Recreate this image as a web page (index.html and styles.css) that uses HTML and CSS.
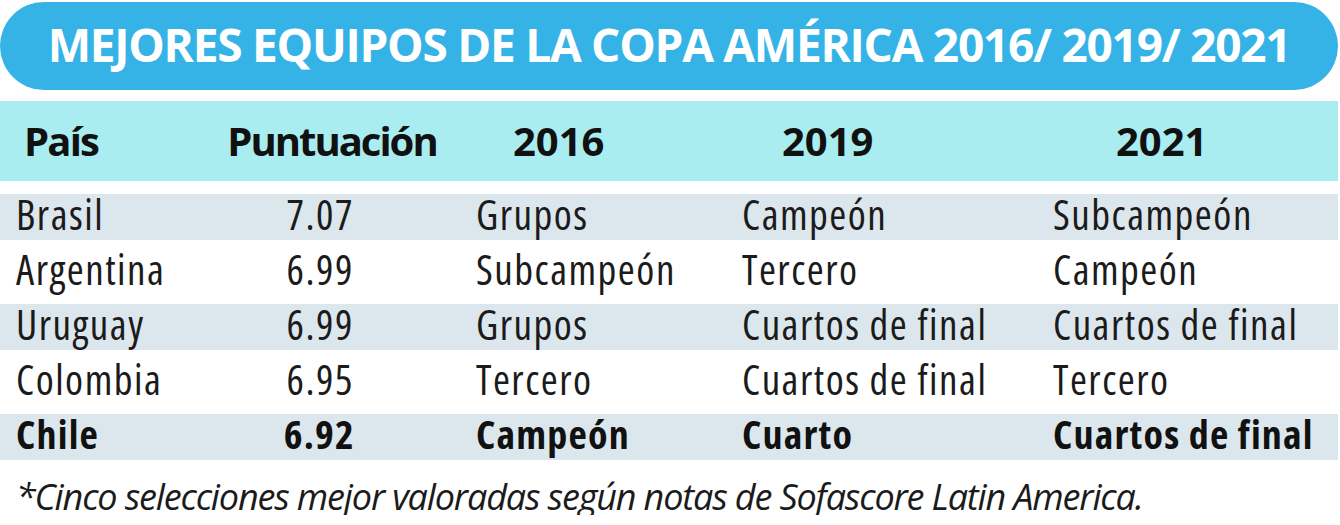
FILE: index.html
```html
<!DOCTYPE html>
<html lang="es">
<head>
<meta charset="utf-8">
<title>Mejores equipos de la Copa América</title>
<link rel="stylesheet" href="styles.css">
</head>
<body>
<div class="page">
  <div class="title">MEJORES EQUIPOS DE LA COPA AMÉRICA 2016/ 2019/ 2021</div>
  <div class="head">
    <div class="h h1">País</div>
    <div class="h h2">Puntuación</div>
    <div class="h h3">2016</div>
    <div class="h h4">2019</div>
    <div class="h h5">2021</div>
  </div>
  <div class="rows">
    <div class="row shade">
      <div class="c c1">Brasil</div><div class="c c2">7.07</div><div class="c c3">Grupos</div><div class="c c4">Campeón</div><div class="c c5">Subcampeón</div>
    </div>
    <div class="row">
      <div class="c c1">Argentina</div><div class="c c2">6.99</div><div class="c c3">Subcampeón</div><div class="c c4">Tercero</div><div class="c c5">Campeón</div>
    </div>
    <div class="row shade">
      <div class="c c1">Uruguay</div><div class="c c2">6.99</div><div class="c c3">Grupos</div><div class="c c4">Cuartos de final</div><div class="c c5">Cuartos de final</div>
    </div>
    <div class="row">
      <div class="c c1">Colombia</div><div class="c c2">6.95</div><div class="c c3">Tercero</div><div class="c c4">Cuartos de final</div><div class="c c5">Tercero</div>
    </div>
    <div class="row shade bold">
      <div class="c c1">Chile</div><div class="c c2">6.92</div><div class="c c3">Campeón</div><div class="c c4">Cuarto</div><div class="c c5">Cuartos de final</div>
    </div>
  </div>
  <div class="note">*Cinco selecciones mejor valoradas según notas de Sofascore Latin America.</div>
</div>
</body>
</html>
```

FILE: styles.css
```css
* { box-sizing: border-box; }
html, body { margin: 0; padding: 0; background: #ffffff; }
body {
  font-family: "Open Sans", "Noto Sans", "Liberation Sans", sans-serif;
  color: #1b1b1b;
}
.page {
  width: 1340px;
  padding-top: 2px;
}
.title {
  width: 1338px;
  height: 88px;
  background: #36b3e6;
  border-radius: 44px;
  color: #ffffff;
  font-weight: 700;
  font-size: 46px;
  line-height: 46px;
  font-stretch: 100%;
  letter-spacing: -1.25px;
  text-align: center;
  padding-top: 19px;
  white-space: nowrap;
}
.head, .row {
  display: grid;
  grid-template-columns: 200px 260px 270px 310px 298px;
  width: 1338px;
}
.head {
  margin-top: 11px;
  height: 80px;
  background: #a9edf0;
  padding-top: 20px;
  font-weight: 700;
  font-size: 40px;
  line-height: 40px;
  font-stretch: 100%;
  color: #111111;
}
.h { white-space: nowrap; }
.h1 { padding-left: 24px; letter-spacing: -1.8px; }
.h2 { text-align: center; padding-left: 4px; letter-spacing: -2px; }
.h3 { padding-left: 53px; }
.h4 { padding-left: 52px; }
.h5 { padding-left: 76px; }
.rows {
  margin-top: 13px;
  display: flex;
  flex-direction: column;
  gap: 9px;
}
.row {
  height: 46px;
  font-size: 41px;
  line-height: 40px;
  align-items: start;
  font-stretch: 75%;
  letter-spacing: 1.5px;
}
.row.shade { background: #dbe7ec; }
.row.bold { font-weight: 700; font-size: 40px; letter-spacing: 1.2px; color: #111111; }
.c { white-space: nowrap; }
.c1 { padding-left: 16px; }
.c2 { text-align: right; padding-right: 106px; }
.c3 { padding-left: 16px; }
.c4 { padding-left: 12px; }
.c5 { padding-left: 13px; }
.row.bold .c2 { padding-right: 105px; }
.note {
  margin-top: 19px;
  padding-left: 16px;
  font-style: italic;
  font-size: 36px;
  line-height: 36px;
  font-stretch: 100%;
  letter-spacing: -1.15px;
  white-space: nowrap;
}
```
